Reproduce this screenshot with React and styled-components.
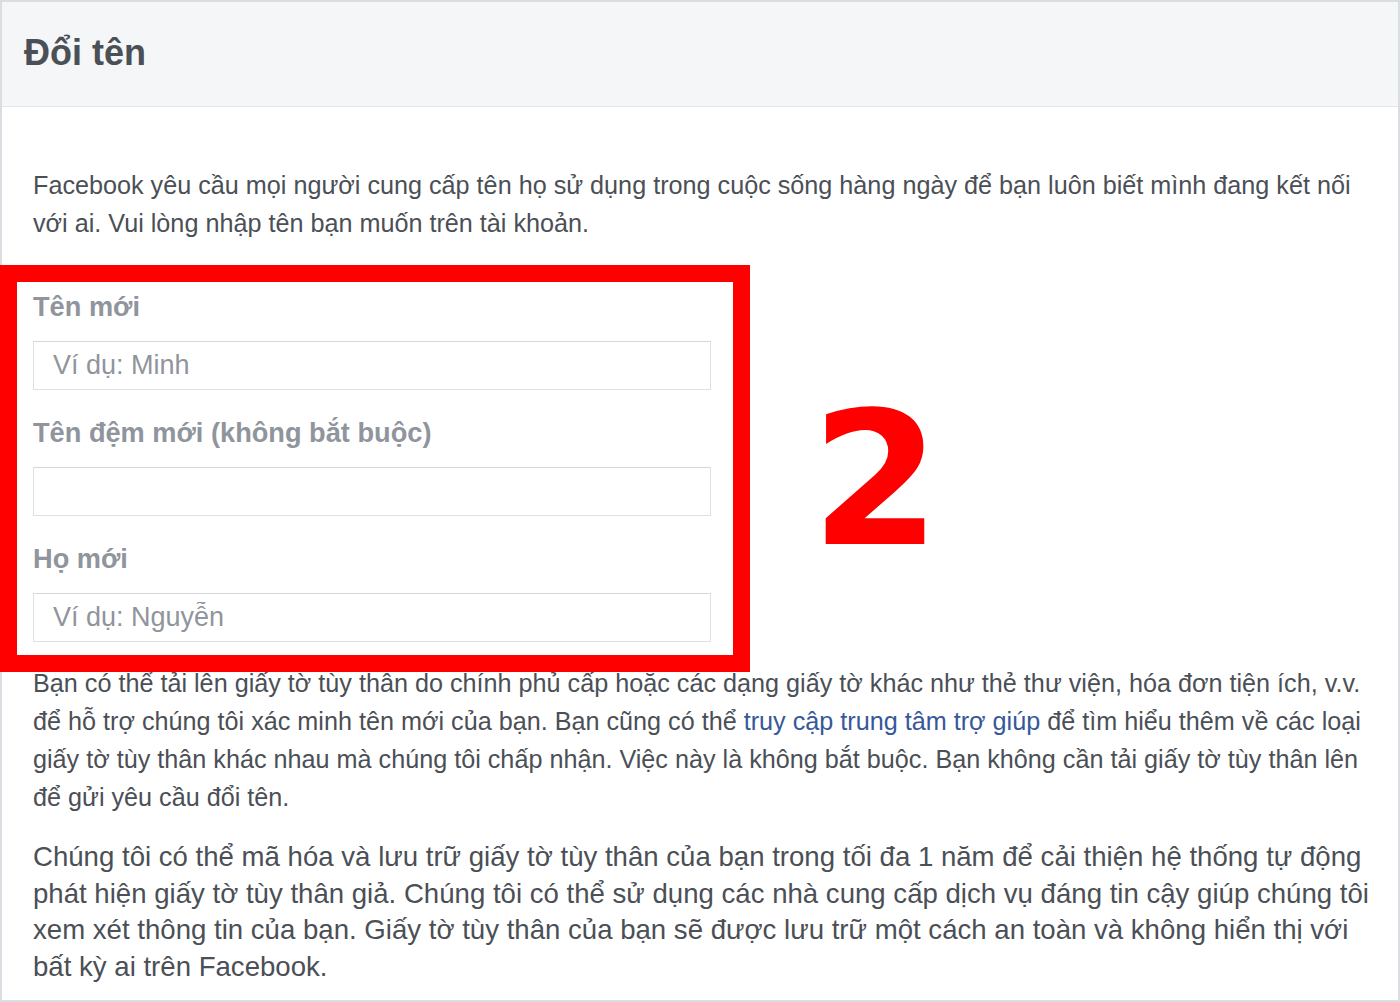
import React from "react";
import styled, { createGlobalStyle } from "styled-components";

const GlobalStyle = createGlobalStyle`
  html, body {
    margin: 0;
    padding: 0;
    background: #ffffff;
  }
  body {
    font-family: "Liberation Sans", Arial, Helvetica, sans-serif;
  }
  * {
    box-sizing: border-box;
  }
`;

// các ô nhập tên
const fields = [
  { label: "Tên mới", placeholder: "Ví dụ: Minh" },
  { label: "Tên đệm mới (không bắt buộc)", placeholder: "" },
  { label: "Họ mới", placeholder: "Ví dụ: Nguyễn" },
];

const App = () => {
  return (
    <>
      <GlobalStyle />
      <Page>
        <Frame>
          <Header>
            <Title>Đổi tên</Title>
          </Header>

          <Body>
            <Paragraph>
              Facebook yêu cầu mọi người cung cấp tên họ sử dụng trong cuộc sống hàng ngày để bạn luôn biết mình đang kết nối
              <br />
              với ai. Vui lòng nhập tên bạn muốn trên tài khoản.
            </Paragraph>

            <Form>
              {fields.map((field, index) => {
                return (
                  <Field key={index}>
                    <Label>{field.label}</Label>
                    <Input type="text" placeholder={field.placeholder} />
                  </Field>
                );
              })}
            </Form>

            <Paragraph $top={22}>
              Bạn có thể tải lên giấy tờ tùy thân do chính phủ cấp hoặc các dạng giấy tờ khác như thẻ thư viện, hóa đơn tiện ích, v.v.
              <br />
              để hỗ trợ chúng tôi xác minh tên mới của bạn. Bạn cũng có thể{" "}
              <Link href="#">truy cập trung tâm trợ giúp</Link> để tìm hiểu thêm về các loại
              <br />
              giấy tờ tùy thân khác nhau mà chúng tôi chấp nhận. Việc này là không bắt buộc. Bạn không cần tải giấy tờ tùy thân lên
              <br />
              để gửi yêu cầu đổi tên.
            </Paragraph>

            <Paragraph $top={23} $size={27.6} $lineHeight={36.5}>
              Chúng tôi có thể mã hóa và lưu trữ giấy tờ tùy thân của bạn trong tối đa 1 năm để cải thiện hệ thống tự động
              <br />
              phát hiện giấy tờ tùy thân giả. Chúng tôi có thể sử dụng các nhà cung cấp dịch vụ đáng tin cậy giúp chúng tôi
              <br />
              xem xét thông tin của bạn. Giấy tờ tùy thân của bạn sẽ được lưu trữ một cách an toàn và không hiển thị với
              <br />
              bất kỳ ai trên Facebook.
            </Paragraph>
          </Body>
        </Frame>

        {/* khung đỏ đánh dấu bước 2 */}
        <Highlight />
        <StepNumber>2</StepNumber>
      </Page>
    </>
  );
};

export default App;

const Page = styled.div`
  position: relative;
  width: 1400px;
  height: 1002px;
  overflow: hidden;
  background: #ffffff;
`;

const Frame = styled.div`
  width: 1400px;
  height: 1002px;
  border: 2px solid #dadde1;
  background: #ffffff;
  overflow: hidden;
`;

const Header = styled.div`
  height: 105px;
  display: flex;
  align-items: center;
  padding-left: 22px;
  padding-bottom: 2px;
  background-color: #f5f6f7;
  border-bottom: 1px solid #e5e5e5;
`;

const Title = styled.h1`
  margin: 0;
  font-size: 36px;
  font-weight: bold;
  color: #4b4f56;
  line-height: 1;
`;

const Body = styled.div`
  padding: 59px 20px 0 31px;
`;

const Paragraph = styled.p`
  margin: ${(props) => props.$top || 0}px 0 0 0;
  font-size: ${(props) => props.$size || 25.2}px;
  line-height: ${(props) => props.$lineHeight || 38}px;
  color: #4b4f56;
  white-space: nowrap;
`;

const Link = styled.a`
  color: #365899;
  text-decoration: none;
`;

const Form = styled.div`
  margin-top: 47px;
  display: flex;
  flex-direction: column;
  gap: 25px;
  width: 678px;
`;

const Field = styled.div`
  display: flex;
  flex-direction: column;
`;

const Label = styled.label`
  font-size: 27.2px;
  font-weight: bold;
  line-height: 36px;
  color: #90949c;
  margin-bottom: 16px;
`;

const Input = styled.input`
  height: 49px;
  width: 100%;
  padding: 0 19px;
  border: 1px solid #dddfe2;
  border-top-color: #d3d6db;
  border-radius: 0;
  background: #ffffff;
  font-family: "Liberation Sans", Arial, Helvetica, sans-serif;
  font-size: 27px;
  color: #1d2129;
  outline: none;

  &::placeholder {
    color: #90949c;
  }
`;

const Highlight = styled.div`
  position: absolute;
  left: 0;
  top: 265px;
  width: 750px;
  height: 407px;
  border: 17px solid #ff0000;
  pointer-events: none;
`;

const StepNumber = styled.div`
  position: absolute;
  left: 811px;
  top: 387px;
  font-family: "DejaVu Sans", Verdana, sans-serif;
  font-size: 186px;
  font-weight: bold;
  line-height: 1;
  color: #ff0000;
`;
